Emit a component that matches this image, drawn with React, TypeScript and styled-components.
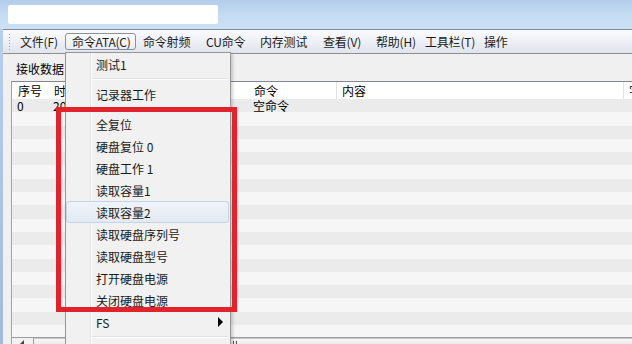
import React from 'react';
import styled, { createGlobalStyle, css } from 'styled-components';

const Global = createGlobalStyle`
  html, body { margin: 0; padding: 0; overflow: hidden; background: #f0f0f0; }
  #root { width: 632px; height: 344px; }
  * { box-sizing: border-box; }
`;

const FONT = `"Noto Sans CJK SC", "Liberation Sans", sans-serif`;

const Window = styled.div`
  position: relative;
  width: 632px;
  height: 344px;
  overflow: hidden;
  display: flex;
  flex-direction: column;
  font-family: ${FONT};
  font-size: 12px;
  color: #000;
`;

const TitleBar = styled.div`
  height: 29px;
  flex: none;
  padding: 5px 0 0 8px;
  background: linear-gradient(180deg, #b3cdea 0%, #c3daf2 45%, #cde2f6 100%);
`;

const TitleBlank = styled.div`
  width: 210px;
  height: 19px;
  background: #fff;
  border-radius: 2px;
`;

const Body = styled.div`
  flex: 1;
  display: flex;
  min-height: 0;
`;

const FrameEdge = styled.div`
  width: 3px;
  flex: none;
  background: linear-gradient(180deg, #b9cfe6, #a3bbd6);
`;

const Main = styled.div`
  flex: 1;
  display: flex;
  flex-direction: column;
  min-width: 0;
`;

const MenuBar = styled.div`
  height: 25px;
  flex: none;
  display: flex;
  align-items: center;
  padding-left: 5px;
  border-top: 1px solid #7d8ca3;
  border-bottom: 1px solid #8d8e92;
  background: linear-gradient(180deg, #fafbfd 0%, #eef0f6 50%, #e0e4ec 100%);
`;

const Grip = styled.div`
  width: 3px;
  height: 17px;
  margin-right: 2px;
  background: radial-gradient(circle, #9aa3b0 0.8px, transparent 1px) 0 0 / 3px 3px;
`;

const BarItem = styled.div<{ $w: number; $active?: boolean }>`
  width: ${(p) => p.$w}px;
  flex: none;
  height: 17px;
  display: flex;
  align-items: center;
  padding-left: 6px;
  white-space: nowrap;
  letter-spacing: -0.2px;
  color: #1b1b1b;
  border: 1px solid transparent;
  border-radius: 3px;
  ${(p) =>
    p.$active &&
    css`
      border-color: #8c9098;
      background: linear-gradient(180deg, #fdfdfe, #e9ecf1);
    `}
`;

const Panel = styled.div`
  flex: 1;
  display: flex;
  flex-direction: column;
  min-height: 0;
  background: #f0f0f0;
  padding-left: 8px;
`;

const Caption = styled.div`
  height: 16px;
  margin: 7px 0 4px 5px;
  line-height: 16px;
  white-space: nowrap;
`;

const List = styled.div`
  flex: 1;
  display: flex;
  flex-direction: column;
  min-height: 0;
  border-top: 1px solid #828790;
  border-left: 1px solid #a0a4aa;
  background: #fff;
`;

const COLS = '36px 200px 88px 287px 1fr';

const HeaderRow = styled.div`
  height: 17px;
  flex: none;
  display: grid;
  grid-template-columns: ${COLS};
  background: #fff;
`;

const HeadCell = styled.div<{ $sep?: boolean }>`
  padding-left: 5px;
  line-height: 17px;
  white-space: nowrap;
  overflow: hidden;
  border-left: 1px solid ${(p) => (p.$sep ? '#e3e3e3' : 'transparent')};
`;

const Rows = styled.div`
  flex: 1;
  min-height: 0;
  overflow: hidden;
`;

const Row = styled.div<{ $odd: boolean }>`
  height: 13.3px;
  display: grid;
  grid-template-columns: ${COLS};
  background: ${(p) => (p.$odd ? '#f6f6f6' : '#ebebeb')};
`;

const Cell = styled.div`
  padding-left: 5px;
  line-height: 13px;
  white-space: nowrap;
  overflow: hidden;
`;

const ScrollBar = styled.div`
  height: 7px;
  flex: none;
  display: flex;
  border-top: 1px solid #9c9c9c;
  background: #f2f2f2;
`;

const ScrollArrow = styled.div`
  width: 20px;
  flex: none;
  display: flex;
  justify-content: center;
  padding-top: 2px;
  &::before {
    content: '';
    width: 0;
    height: 0;
    border-top: 4px solid transparent;
    border-bottom: 4px solid transparent;
    border-right: 4px solid #444;
  }
`;

const Thumb = styled.div`
  flex: 1;
  display: flex;
  justify-content: center;
  padding-top: 2px;
  border-left: 1px solid #9c9c9c;
  border-top: 1px solid #c8c8c8;
  margin-left: 1px;
  background: linear-gradient(180deg, #f7f7f7, #ececec);
`;

const GripLines = styled.div`
  width: 7px;
  height: 5px;
  margin-right: 200px;
  background: repeating-linear-gradient(90deg, #555 0 1px, transparent 1px 3px);
`;

/* dropdown */
const Dropdown = styled.div`
  position: absolute;
  left: 65px;
  top: 52px;
  width: 166px;
  height: 300px;
  border: 1px solid #979797;
  box-shadow: 2px 2px 3px rgba(0, 0, 0, 0.18);
  background: linear-gradient(
    90deg,
    #f1f1f1 0 24px,
    #e2e3e3 24px 25px,
    #ffffff 25px 26px,
    #f1f1f1 26px
  );
  display: flex;
  flex-direction: column;
`;

const Entry = styled.div<{ $hover?: boolean }>`
  height: 22px;
  flex: none;
  display: flex;
  align-items: center;
  margin-right: 1px;
  padding-left: 29px;
  border: 1px solid transparent;
  border-radius: 3px;
  white-space: nowrap;
  color: #1a1a1a;
  ${(p) =>
    p.$hover &&
    css`
      border-color: #c4d3e6;
      background: linear-gradient(180deg, #f0f4f9, #e3eaf3);
    `}
`;

const SubArrow = styled.span`
  margin-left: auto;
  margin-right: 5px;
  width: 0;
  height: 0;
  border-top: 5px solid transparent;
  border-bottom: 5px solid transparent;
  border-left: 5px solid #000;
`;

const Separator = styled.div`
  height: 8px;
  flex: none;
  margin: 0 2px 0 26px;
  background: linear-gradient(
    180deg,
    transparent 0 3px,
    #e0e0e0 3px 4px,
    #ffffff 4px 5px,
    transparent 5px
  );
`;

const Highlight = styled.div`
  position: absolute;
  left: 56px;
  top: 107px;
  width: 181px;
  height: 205px;
  border: 5px solid #e2232b;
`;

const barItems: { label: string; w: number; active?: boolean }[] = [
  { label: '文件(F)', w: 52 },
  { label: '命令ATA(C)', w: 71, active: true },
  { label: '命令射频', w: 63 },
  { label: 'CU命令', w: 54 },
  { label: '内存测试', w: 63 },
  { label: '查看(V)', w: 53 },
  { label: '帮助(H)', w: 49 },
  { label: '工具栏(T)', w: 59 },
  { label: '操作', w: 40 },
];

type MenuLine = { sep: true } | { sep?: false; label: string; hover?: boolean; sub?: boolean };

const menuLines: MenuLine[] = [
  { label: '测试1' },
  { sep: true },
  { label: '记录器工作' },
  { sep: true },
  { label: '全复位' },
  { label: '硬盘复位 0' },
  { label: '硬盘工作 1' },
  { label: '读取容量1' },
  { label: '读取容量2', hover: true },
  { label: '读取硬盘序列号' },
  { label: '读取硬盘型号' },
  { label: '打开硬盘电源' },
  { label: '关闭硬盘电源' },
  { label: 'FS', sub: true },
  { sep: true },
  { label: '' },
];

const rowCount = 18;

export default function App() {
  return (
    <>
      <Global />
      <Window>
        <TitleBar>
          <TitleBlank />
        </TitleBar>
        <Body>
          <FrameEdge />
          <Main>
            <MenuBar>
              <Grip />
              {barItems.map((b) => (
                <BarItem key={b.label} $w={b.w} $active={b.active}>
                  {b.label}
                </BarItem>
              ))}
            </MenuBar>
            <Panel>
              <Caption>接收数据</Caption>
              <List>
                <HeaderRow>
                  <HeadCell>序号</HeadCell>
                  <HeadCell>时间</HeadCell>
                  <HeadCell>命令</HeadCell>
                  <HeadCell $sep>内容</HeadCell>
                  <HeadCell $sep>字节</HeadCell>
                </HeaderRow>
                <Rows>
                  {Array.from({ length: rowCount }, (_, i) => (
                    <Row key={i} $odd={i % 2 === 1}>
                      {i === 0 ? (
                        <>
                          <Cell>0</Cell>
                          <Cell>2023-06-01 10:20:30</Cell>
                          <Cell>空命令</Cell>
                          <Cell />
                          <Cell />
                        </>
                      ) : null}
                    </Row>
                  ))}
                </Rows>
                <ScrollBar>
                  <ScrollArrow />
                  <Thumb>
                    <GripLines />
                  </Thumb>
                </ScrollBar>
              </List>
            </Panel>
          </Main>
        </Body>

        <Dropdown>
          {menuLines.map((m, i) =>
            m.sep ? (
              <Separator key={i} />
            ) : (
              <Entry key={i} $hover={m.hover}>
                {m.label}
                {m.sub && <SubArrow />}
              </Entry>
            )
          )}
        </Dropdown>
        <Highlight />
      </Window>
    </>
  );
}
